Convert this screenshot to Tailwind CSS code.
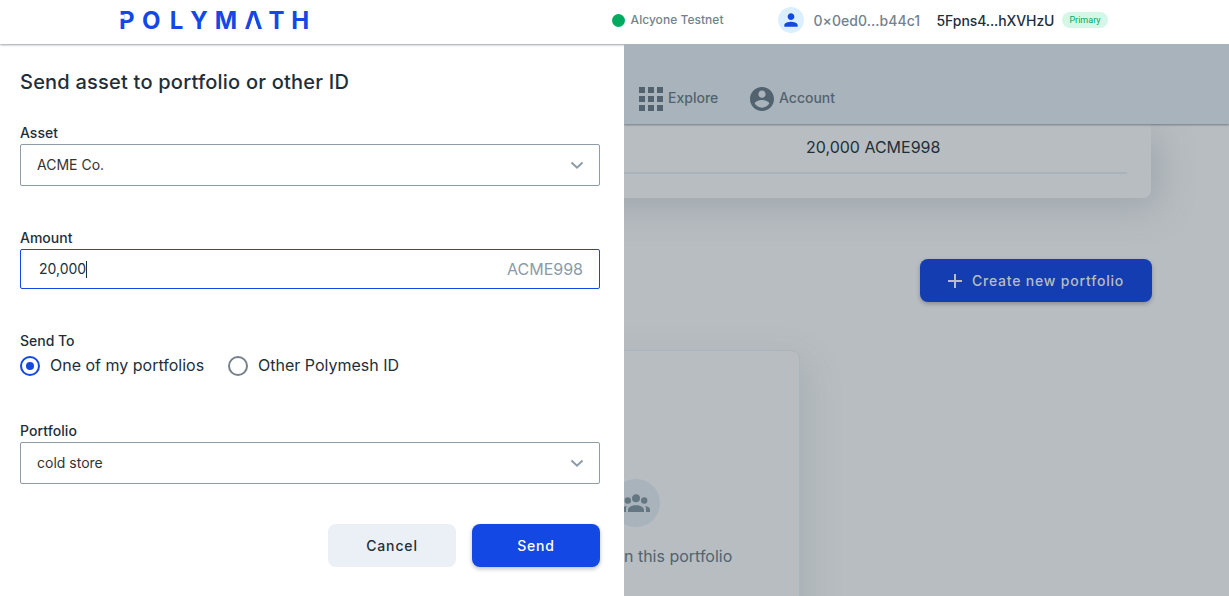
<!DOCTYPE html>
<html lang="en">
<head>
<meta charset="utf-8">
<title>Polymath</title>
<script src="https://cdn.jsdelivr.net/npm/@tailwindcss/browser@4"></script>
</head>
<body class="flex h-[596px] w-[1229px] flex-col overflow-hidden bg-white font-['Inter',sans-serif] text-[#1e2f3a]">
<header class="relative z-10 flex h-11 shrink-0 items-center bg-white pb-1 pl-[119px] shadow-[0_1px_2px_rgba(30,47,58,0.45)]">
  <svg class="-mt-px h-[22px] w-[192px] shrink-0" viewBox="0 0 192 22" role="img" aria-label="Polymath">
    <text y="19.800" x="7.800 32.200 57.500 80 107 134.500 157.500 181.200" text-anchor="middle" fill="#1348e4" font-family="Inter" font-weight="700" font-size="24">POLYMATH</text>
    <path d="M0 5.800h5.500v3.900H0z M134.500 6.500l5 14h-10z" fill="#fff"/>
  </svg>
  <div class="ml-[300.600px] flex w-[166.400px] items-center gap-[6px] text-[12px] font-medium text-[#74828e]"><span class="size-[13px] rounded-full bg-[#00aa5e]"></span><span class="tracking-[0.03px]">Alcyone Testnet</span></div>
  <span class="flex size-[26px] items-center justify-center rounded-full bg-[#dcefff]"><svg class="size-5" viewBox="0 0 24 24" fill="#1348e4"><path d="M12 12c2.200 0 4-1.800 4-4s-1.800-4-4-4-4 1.800-4 4 1.800 4 4 4zm0 2c-2.700 0-8 1.300-8 4v2h16v-2c0-2.700-5.300-4-8-4z"/></svg></span>
  <span class="ml-[9.500px] w-[123px] text-[14px] font-medium tracking-[0.04px] text-[#74828e]">0×0ed0...b44c1</span>
  <span class="w-[125.500px] text-[14px] font-medium tracking-[-0.1px]">5Fpns4...hXVHzU</span>
  <span class="flex h-4 w-[46px] items-center justify-center rounded-full bg-[#d4f7e7] pt-px font-['Roboto',sans-serif] text-[9px] text-[#00aa5e]">Primary</span>
</header>
<div class="flex min-h-0 flex-1">
  <main class="flex w-[624px] shrink-0 flex-col bg-white pt-6 pr-6 pl-5">
    <h1 class="h-7 text-[20px] leading-7 font-medium tracking-[0.22px]">Send asset to portfolio or other ID</h1>
    <label class="mt-[26px] h-[22px] text-[14px] leading-[21px] font-medium">Asset</label>
    <div class="flex h-[42px] items-center justify-between rounded-[2px] border border-[#8c9ba7] pr-[15px] pl-4 text-[14px] text-[#333]"><span class="pb-0.5">ACME Co.</span><svg class="h-3 w-3.5" viewBox="0 0 14 12" fill="none" stroke="#8c9ba7" stroke-width="2"><path d="M1.500 3.500 7 8.700l5.500-5.200"/></svg></div>
    <label class="mt-[41px] h-[22px] text-[14px] leading-[21px] font-medium">Amount</label>
    <div class="flex h-10 items-center justify-between rounded-[2px] border border-[#1348e4] pr-4 pl-[18px]"><span class="flex items-center text-[14px]"><span class="pb-0.5">20,000</span><span class="h-[17px] w-px bg-[#1e2f3a]"></span></span><span class="text-[16px] text-[#8c9ba7]">ACME998</span></div>
    <div class="mt-[41px] h-[21px] text-[14px] leading-[21px] font-medium">Send To</div>
    <div class="mt-px flex h-7 items-center text-[16px]">
      <span class="mr-[10px] flex size-5 items-center justify-center rounded-full border-2 border-[#1348e4]"><span class="size-2 rounded-full bg-[#1348e4]"></span></span><span class="w-[178px] pb-0.5">One of my portfolios</span>
      <span class="mr-[10px] size-5 rounded-full border-2 border-[#74828e]"></span><span class="pb-0.5">Other Polymesh ID</span>
    </div>
    <label class="mt-10 h-[22px] text-[14px] leading-[21px] font-medium tracking-[0.08px]">Portfolio</label>
    <div class="flex h-[42px] items-center justify-between rounded-[2px] border border-[#8c9ba7] pr-[15px] pl-4 text-[14px] text-[#333]"><span class="pb-0.5">cold store</span><svg class="h-3 w-3.5" viewBox="0 0 14 12" fill="none" stroke="#8c9ba7" stroke-width="2"><path d="M1.500 3.500 7 8.700l5.500-5.200"/></svg></div>
    <div class="mt-10 flex justify-end gap-4 text-[14px] font-medium tracking-[0.85px]">
      <button class="h-[43px] w-32 rounded-lg bg-[#ebf0f7]">Cancel</button>
      <button class="h-[43px] w-32 rounded-lg bg-[#1348e4] text-white shadow-[0_2px_4px_rgba(0,0,0,0.25)]">Send</button>
    </div>
  </main>
  <aside class="flex flex-1 flex-col overflow-hidden bg-[#b8bdc1]">
    <nav class="relative z-10 flex h-20 shrink-0 items-center bg-[#a9b3bc] pt-[29px] pl-[15px] text-[14px] font-medium text-[#52636f] shadow-[0_1px_2px_rgba(30,47,58,0.45)]">
      <svg class="size-6" viewBox="0 0 24 24" fill="#52636f"><path d="M0 0h6v6H0zM9 0h6v6H9zM18 0h6v6h-6zM0 9h6v6H0zM9 9h6v6H9zM18 9h6v6h-6zM0 18h6v6H0zM9 18h6v6H9zM18 18h6v6h-6z"/></svg>
      <span class="ml-[5px] w-[82px] pb-[3px]">Explore</span>
      <svg class="size-6" viewBox="2 2 20 20" fill="#52636f"><path d="M12 2C6.480 2 2 6.480 2 12s4.480 10 10 10 10-4.480 10-10S17.520 2 12 2zm0 3c1.660 0 3 1.340 3 3s-1.340 3-3 3-3-1.340-3-3 1.340-3 3-3zm0 14.200c-2.500 0-4.710-1.280-6-3.220.03-1.990 4-3.080 6-3.080 1.990 0 5.970 1.090 6 3.080-1.290 1.940-3.500 3.220-6 3.220z"/></svg>
      <span class="ml-[5px] pb-[3px]">Account</span>
    </nav>
    <section class="-ml-[100px] h-[74px] w-[627px] shrink-0 rounded-br-lg bg-[#b8bdc1] pt-[11px] pr-6 shadow-[8px_10px_36px_rgba(90,110,120,0.26)]">
      <div class="h-[39px] border-b-2 border-[#a9b3bc] pl-[282px] text-[16px] leading-6">20,000 ACME998</div>
    </section>
    <button class="mt-[61px] ml-[296px] flex h-[43px] w-[232px] shrink-0 items-center justify-center gap-[10px] rounded-lg bg-[#133db0] text-[14px] font-medium tracking-[0.8px] text-[#b8bdc1] shadow-[0_2px_4px_rgba(0,0,0,0.25)]">
      <svg class="size-3.5" viewBox="0 0 14 14" fill="#b8bdc1"><path d="M6 0h2v6h6v2H8v6H6V8H0V6h6z"/></svg>Create new portfolio</button>
    <section class="mt-12 -ml-[151px] flex h-[330px] w-[327px] shrink-0 flex-col items-center rounded-lg border border-[#aab4bc] bg-[#b8bdc1] pt-32 shadow-[8px_10px_36px_rgba(90,110,120,0.16)]">
      <span class="mr-px flex size-12 shrink-0 items-center justify-center rounded-full bg-[#a9b3bc]"><svg class="h-[18px] w-7" viewBox="0 0 28 18" fill="#647681"><circle cx="5.800" cy="6.500" r="3.200"/><circle cx="22.200" cy="6.500" r="3.200"/><circle cx="14" cy="4.300" r="4.600" stroke="#a9b3bc" stroke-width="1.200"/><path d="M6 18v-2c0-3 4-4.800 8-4.800s8 1.800 8 4.800v2zM0 18v-2.400c0-1.900 2-3.200 4.800-3.500-.6 1-.8 2.100-.8 3.300V18zM28 18v-2.400c0-1.900-2-3.200-4.800-3.500.6 1 .8 2.100.8 3.300V18z"/></svg></span>
      <p class="mt-[17px] text-[16px] leading-6 whitespace-nowrap text-[#52636f]">No assets in this portfolio</p>
    </section>
  </aside>
</div>
</body>
</html>
